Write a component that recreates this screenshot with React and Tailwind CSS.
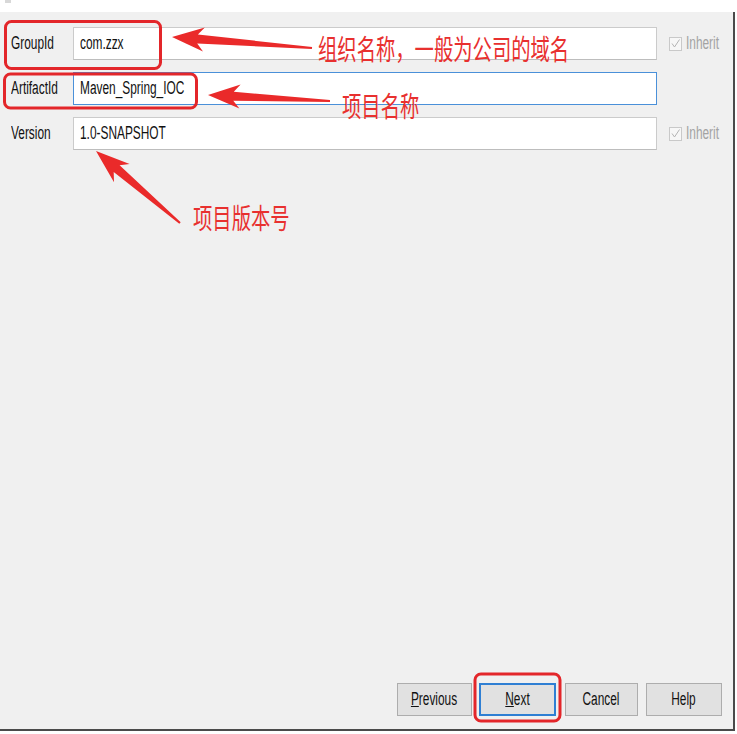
const arrow = (tx, ty, ex, ey, hl = 30, hw = 11, sw1 = 4.5, sw2 = 1) => {
  const dx = ex - tx;
  const dy = ey - ty;
  const len = Math.hypot(dx, dy);
  const ux = dx / len;
  const uy = dy / len;
  const nx = -uy;
  const ny = ux;
  const p = (d, w) => `${(tx + ux * d + nx * w).toFixed(1)},${(ty + uy * d + ny * w).toFixed(1)}`;
  return [
    p(0, 0),
    p(hl, hw),
    p(hl * 0.8, sw1),
    p(len, sw2),
    p(len, -sw2),
    p(hl * 0.8, -sw1),
    p(hl, -hw),
  ].join(" ");
};

const font = { fontFamily: '"Liberation Sans", Arial, sans-serif' };
const cjk = { fontFamily: '"Noto Sans CJK SC", sans-serif' };

const Squeeze = ({ children, center }) => (
  <span className={`inline-block whitespace-nowrap scale-x-[0.66] ${center ? "origin-center" : "origin-left"}`}>
    {children}
  </span>
);

const Inherit = () => (
  <div className="flex items-center gap-[4px] text-[18px] text-[#a3a3a3]">
    <span className="shrink-0 w-[13px] h-[14px] border border-[#c9c9c9] bg-[#f7f7f7] flex items-center justify-center">
      <svg width="11" height="11" viewBox="0 0 11 11">
        <path d="M2 5.5 L4.5 9 L9.5 1.5" fill="none" stroke="#b5b5b5" strokeWidth="1" />
      </svg>
    </span>
    <Squeeze>Inherit</Squeeze>
  </div>
);

const rows = [
  { label: "GroupId", value: "com.zzx", inherit: true },
  { label: "ArtifactId", value: "Maven_Spring_IOC", focus: true },
  { label: "Version", value: "1.0-SNAPSHOT", inherit: true },
];

const buttons = [
  { label: "Previous", u: "P", rest: "revious", cls: "w-[75px] border border-[#adadad]" },
  { label: "Next", u: "N", rest: "ext", cls: "w-[77px] ml-[7px] border-2 border-[#2f7fd3]" },
  { label: "Cancel", cls: "w-[73px] ml-[9px] border border-[#adadad]" },
  { label: "Help", cls: "w-[76px] ml-[8px] border border-[#adadad]" },
];

export default function App() {
  return (
    <div className="relative w-[737px] h-[734px] bg-white overflow-hidden" style={font}>
      <div className="mt-[12px] w-[735px] h-[719px] bg-[#f0f0f0] border-r-2 border-b-2 border-[#4a4a4a] flex flex-col text-[18px] text-[#111]">
        <div className="pt-[15px] flex flex-col gap-[12px]">
          {rows.map((r) => (
            <div key={r.label} className="flex items-center h-[33px]">
              <div className="shrink-0 w-[73px] pl-[11px]">
                <Squeeze>{r.label}</Squeeze>
              </div>
              <div
                className={`shrink-0 w-[584px] h-[33px] bg-white flex items-center pl-[6px] border ${
                  r.focus ? "border-[#4a90d9]" : "border-[#cbcbcb] border-b-[#bdbdbd]"
                }`}
              >
                <Squeeze>{r.value}</Squeeze>
              </div>
              {r.inherit && (
                <div className="ml-[12px] min-w-0">
                  <Inherit />
                </div>
              )}
            </div>
          ))}
        </div>

        <div className="mt-auto pb-[13px] pr-[11px] flex justify-end">
          {buttons.map((b) => (
            <div key={b.label} className={`h-[33px] flex items-center justify-center bg-[#e1e1e1] ${b.cls}`}>
              <Squeeze center>
                {b.u ? (
                  <>
                    <span className="underline">{b.u}</span>
                    {b.rest}
                  </>
                ) : (
                  b.label
                )}
              </Squeeze>
            </div>
          ))}
        </div>
      </div>

      <div className="absolute left-[5px] top-0 w-[6px] h-[3px] bg-[#d8d8d8]" />

      <svg className="absolute inset-0 pointer-events-none" width="737" height="734" viewBox="0 0 737 734">
        <rect x="5.5" y="21.5" width="155" height="47" rx="6" fill="none" stroke="#e3262a" strokeWidth="3" />
        <rect x="4.5" y="74" width="192" height="34" rx="6" fill="none" stroke="#e3262a" strokeWidth="3" />
        <rect x="475" y="674" width="85" height="47" rx="6" fill="none" stroke="#e3262a" strokeWidth="3" />
        <polygon points={arrow(172, 37, 312, 48, 32, 12)} fill="#ea2a2a" />
        <polygon points={arrow(208, 95, 330, 101, 32, 12)} fill="#ea2a2a" />
        <polygon points={arrow(96, 151, 180, 223, 34, 12, 4.5, 1)} fill="#ea2a2a" />
      </svg>

      <div className="absolute left-[318px] top-[34px] text-[28px] leading-none text-[#e8302f]" style={cjk}>
        <span className="inline-block whitespace-nowrap origin-left scale-x-[0.69]">组织名称，一般为公司的域名</span>
      </div>
      <div className="absolute left-[342px] top-[91px] text-[28px] leading-none text-[#e8302f]" style={cjk}>
        <span className="inline-block whitespace-nowrap origin-left scale-x-[0.69]">项目名称</span>
      </div>
      <div className="absolute left-[193px] top-[203px] text-[28px] leading-none text-[#e8302f]" style={cjk}>
        <span className="inline-block whitespace-nowrap origin-left scale-x-[0.69]">项目版本号</span>
      </div>
    </div>
  );
}
